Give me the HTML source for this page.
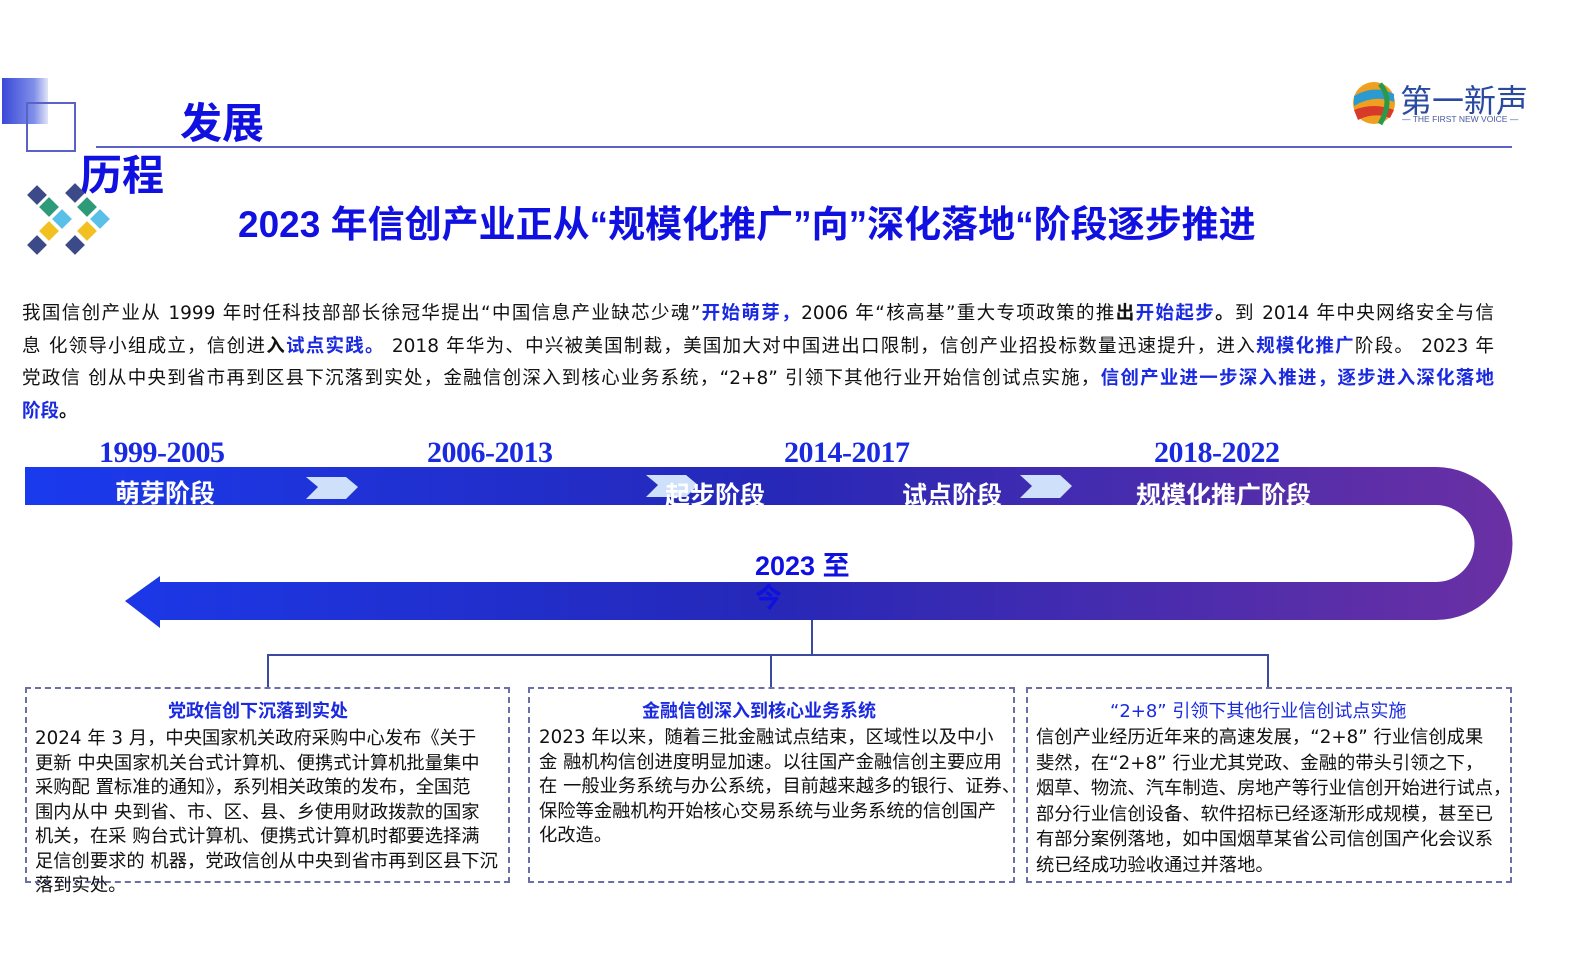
<!DOCTYPE html>
<html><head><meta charset="utf-8"><style>
body{margin:0;width:1587px;height:963px;background:#fff;position:relative;overflow:hidden;font-family:"Liberation Sans","Noto Sans CJK SC",sans-serif;color:#111}
.a{position:absolute;white-space:nowrap}
.b{color:#1a2ae0;font-weight:bold}
.p{font-size:18.5px;left:22px;font-family:"DejaVu Sans","Noto Sans CJK SC",sans-serif}
.j{width:1472px;text-align:justify;text-align-last:justify;text-justify:inter-character}
.yr{font-family:"Liberation Serif","Noto Serif CJK SC",serif;font-weight:bold;color:#1a2ae0;font-size:30px;letter-spacing:-0.5px}
.st{color:#fff;font-weight:bold;font-size:25px}
.box{position:absolute;border:2px dashed #6a6fa8;box-sizing:border-box}
.bt{position:absolute;font-size:18.3px;line-height:24.5px;white-space:nowrap;font-family:"DejaVu Sans","Noto Sans CJK SC",sans-serif}
.bh{position:absolute;font-size:18px;font-weight:bold;color:#1a2ae0;white-space:nowrap}
</style></head><body>
<div class="a" style="left:2px;top:78px;width:46px;height:46px;background:linear-gradient(90deg,#3a48d8,#8090e8 70%,#e0e4f8)"></div>
<div class="a" style="left:26px;top:102px;width:46px;height:46px;border:2px solid #5a62c8"></div>
<div class="a" style="left:96px;top:146px;width:1416px;height:2px;background:#5a62c8"></div>
<div class="a b" style="left:180px;top:90px;font-size:42px;color:#1010e0">发展</div>
<div class="a b" style="left:80px;top:142px;font-size:42px;color:#1010e0">历程</div>
<svg class="a" style="left:22px;top:180px" width="92" height="80">
<rect x="8" y="8" width="14" height="14" fill="#3d4a8a" transform="rotate(45 15 15)"/>
<rect x="46" y="6" width="14" height="14" fill="#3d4a8a" transform="rotate(45 53 13)"/>
<rect x="20" y="20" width="14" height="14" fill="#2d9a7a" transform="rotate(45 27 27)"/>
<rect x="58" y="20" width="14" height="14" fill="#2d9a7a" transform="rotate(45 65 27)"/>
<rect x="33" y="32" width="14" height="14" fill="#5ac0e8" transform="rotate(45 40 39)"/>
<rect x="71" y="32" width="14" height="14" fill="#5ac0e8" transform="rotate(45 78 39)"/>
<rect x="20" y="44" width="14" height="14" fill="#f2c020" transform="rotate(45 27 51)"/>
<rect x="58" y="44" width="14" height="14" fill="#f2c020" transform="rotate(45 65 51)"/>
<rect x="8" y="58" width="14" height="14" fill="#3d4a8a" transform="rotate(45 15 65)"/>
<rect x="46" y="58" width="14" height="14" fill="#3d4a8a" transform="rotate(45 53 65)"/>
</svg>
<svg class="a" style="left:1350px;top:80px" width="48" height="46"><circle cx="24" cy="23" r="21" fill="#f0a020"/><path d="M4 16 Q24 4 44 14 L44 22 Q24 14 4 26Z" fill="#2a9ad0"/><path d="M4 30 Q24 22 44 30 L40 38 Q24 32 8 40Z" fill="#d83a2a"/><path d="M30 4 Q44 20 30 44" stroke="#2a9a4a" stroke-width="5" fill="none"/></svg>
<div class="a" style="left:1400px;top:76px;font-size:32px;color:#2a4aa0">第一新声</div>
<div class="a" style="left:1402px;top:114px;font-size:8.5px;color:#4a5aa0">— THE FIRST NEW VOICE —</div>
<div class="a b" style="left:238px;top:194px;font-size:37px;color:#1010e0">2023 年信创产业正从“规模化推广”向”深化落地“阶段逐步推进</div>
<div class="a p j" style="top:299px">我国信创产业从 1999 年时任科技部部长徐冠华提出“中国信息产业缺芯少魂”<span class="b">开始萌芽，</span>2006 年“核高基”重大专项政策的推<b>出</b><span class="b">开始起步</span><b>。</b>到 2014 年中央网络安全与信</div>
<div class="a p j" style="top:332px">息 化领导小组成立，信创进<b>入</b><span class="b">试点实践。</span> 2018 年华为、中兴被美国制裁，美国加大对中国进出口限制，信创产业招投标数量迅速提升，进入<span class="b">规模化推广</span>阶段。 2023 年</div>
<div class="a p j" style="top:364px">党政信 创从中央到省市再到区县下沉落到实处，金融信创深入到核心业务系统，“2+8” 引领下其他行业开始信创试点实施，<span class="b">信创产业进一步深入推进，逐步进入深化落地</span></div>
<div class="a p" style="top:397px"><span class="b">阶段</span><b>。</b></div>
<svg class="a" style="left:0;top:460px" width="1587" height="170">
<defs><linearGradient id="g" x1="0" x2="1"><stop offset="0" stop-color="#1a3aee"/><stop offset="0.5" stop-color="#2628b8"/><stop offset="1" stop-color="#6a30a4"/></linearGradient></defs>
<path d="M25 7 H1436 A76 76 0 0 1 1436 160 H160 L160 168 L125 141 L160 116 L160 122 H1436 A38 38 0 0 0 1436 45 H25 Z" fill="url(#g)"/>
<path d="M306 17 H346 L358 27 L346 39 H306 L318 27Z" fill="#cfe0fa"/>
<path d="M646 15 H686 L698 25 L686 37 H646 L658 25Z" fill="#cfe0fa"/>
<path d="M1020 15 H1060 L1072 26 L1060 38 H1020 L1032 26Z" fill="#cfe0fa"/>
</svg>
<div class="a yr" style="left:99px;top:436px">1999-2005</div>
<div class="a yr" style="left:427px;top:436px">2006-2013</div>
<div class="a yr" style="left:784px;top:436px">2014-2017</div>
<div class="a yr" style="left:1154px;top:436px">2018-2022</div>
<div class="a st" style="left:115px;top:474px">萌芽阶段</div>
<div class="a st" style="left:665px;top:476px">起步阶段</div>
<div class="a st" style="left:902px;top:476px">试点阶段</div>
<div class="a st" style="left:1136px;top:476px">规模化推广阶段</div>
<div class="a b" style="left:755px;top:544px;font-size:27px;color:#1010e0">2023 至</div>
<div class="a b" style="left:755px;top:576px;font-size:27px;color:#1010e0">今</div>
<div class="a" style="left:811px;top:620px;width:2px;height:35px;background:#3a4aa0"></div>
<div class="a" style="left:267px;top:654px;width:1002px;height:2px;background:#3a4aa0"></div>
<div class="a" style="left:267px;top:654px;width:2px;height:33px;background:#3a4aa0"></div>
<div class="a" style="left:770px;top:654px;width:2px;height:33px;background:#3a4aa0"></div>
<div class="a" style="left:1267px;top:654px;width:2px;height:33px;background:#3a4aa0"></div>
<div class="box" style="left:25px;top:687px;width:485px;height:196px"></div>
<div class="box" style="left:528px;top:687px;width:487px;height:196px"></div>
<div class="box" style="left:1026px;top:687px;width:486px;height:196px"></div>
<div class="bh" style="left:168px;top:697px">党政信创下沉落到实处</div>
<div class="bt" style="left:35px;top:727px">2024 年 3 月，中央国家机关政府采购中心发布《关于<br>更新 中央国家机关台式计算机、便携式计算机批量集中<br>采购配 置标准的通知》，系列相关政策的发布，全国范<br>围内从中 央到省、市、区、县、乡使用财政拨款的国家<br>机关，在采 购台式计算机、便携式计算机时都要选择满<br>足信创要求的 机器，党政信创从中央到省市再到区县下沉<br>落到实处。</div>
<div class="bh" style="left:642px;top:697px">金融信创深入到核心业务系统</div>
<div class="bt" style="left:539px;top:726px">2023 年以来，随着三批金融试点结束，区域性以及中小<br>金 融机构信创进度明显加速。以往国产金融信创主要应用<br>在 一般业务系统与办公系统，目前越来越多的银行、证券、<br>保险等金融机构开始核心交易系统与业务系统的信创国产<br>化改造。</div>
<div class="bh" style="left:1110px;top:697px;font-weight:normal;font-family:'DejaVu Sans','Noto Sans CJK SC',sans-serif">“2+8” 引领下其他行业信创试点实施</div>
<div class="bt" style="left:1036px;top:725px;line-height:25.5px">信创产业经历近年来的高速发展，“2+8” 行业信创成果<br>斐然，在“2+8” 行业尤其党政、金融的带头引领之下，<br>烟草、物流、汽车制造、房地产等行业信创开始进行试点，<br> 部分行业信创设备、软件招标已经逐渐形成规模，甚至已<br>有部分案例落地，如中国烟草某省公司信创国产化会议系<br>统已经成功验收通过并落地。</div>
</body></html>
